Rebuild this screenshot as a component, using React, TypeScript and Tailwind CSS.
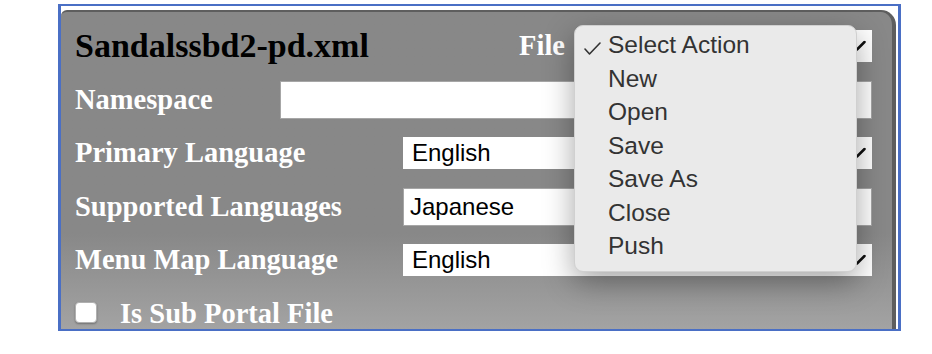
import React from "react";

const serif = "font-['Liberation_Serif',serif] font-bold text-white";
const sans = "font-['Liberation_Sans',Arial,sans-serif]";

function Chevron() {
  return (
    <svg
      className="absolute right-[6px] top-1/2 -translate-y-1/2"
      width="18"
      height="11"
      viewBox="0 0 18 11"
      fill="none"
    >
      <path d="M1.5 1.5 L9 9 L16.5 1.5" stroke="#111" strokeWidth="2.5" strokeLinecap="round" strokeLinejoin="round" />
    </svg>
  );
}

function SelectBox({ value, className }: { value?: string; className: string }) {
  return (
    <div className={`relative h-[32px] bg-white ${className}`}>
      {value && (
        <span className={`${sans} block pl-[9px] text-[24px] leading-[32px] text-black`}>{value}</span>
      )}
      <Chevron />
    </div>
  );
}

function TextBox({ value, className }: { value?: string; className: string }) {
  return (
    <div className={`h-[38px] bg-white border border-[#a6a6a6] ${className}`}>
      {value && (
        <span className={`${sans} block pl-[6px] text-[24px] leading-[36px] text-black`}>{value}</span>
      )}
    </div>
  );
}

const actions = ["Select Action", "New", "Open", "Save", "Save As", "Close", "Push"];

export default function App() {
  return (
    <div className="relative w-[932px] h-[354px] bg-white overflow-hidden pt-[4px] pl-[58px]">
      <div className="flex flex-col w-[843px] h-[327px] border-[#4a6fc5] border-t-2 border-b-2 border-l-[3px] border-r-[3px] overflow-hidden bg-white">
        <div className="flex-1 mt-[4px] mr-[2px] rounded-tl-[6px] rounded-tr-[15px] border-t-2 border-r-4 border-[#5e5e5e] bg-linear-to-b from-[#888888] from-70% to-[#a3a3a3] pt-[18px] pl-[14px] pr-[20px]">
          <div className="flex h-[32px] items-center">
            <span className="font-['Liberation_Serif',serif] font-bold text-[34px] leading-[32px] text-black">
              Sandalssbd2-pd.xml
            </span>
            <div className="flex-1" />
            <span className={`${serif} text-[28.5px] leading-[32px]`}>File</span>
            <SelectBox className="ml-[10px] w-[297px]" />
          </div>

          <div className="mt-[19px] flex h-[38px] items-center">
            <span className={`${serif} text-[28.5px] leading-[38px]`}>Namespace</span>
            <TextBox className="ml-auto w-[592px]" />
          </div>

          <div className="mt-[18px] flex h-[32px] items-center">
            <span className={`${serif} text-[28.5px] leading-[32px]`}>Primary Language</span>
            <SelectBox value="English" className="ml-auto w-[469px]" />
          </div>

          <div className="mt-[19px] flex h-[38px] items-center">
            <span className={`${serif} text-[28.5px] leading-[38px]`}>Supported Languages</span>
            <TextBox value="Japanese" className="ml-auto w-[469px]" />
          </div>

          <div className="mt-[18px] flex h-[32px] items-center">
            <span className={`${serif} text-[28.5px] leading-[32px]`}>Menu Map Language</span>
            <SelectBox value="English" className="ml-auto w-[469px]" />
          </div>

          <div className="mt-[24px] flex items-start">
            <div className="mt-[2px] h-[21px] w-[22px] rounded-[4px] border border-[#b0b0b0] bg-white shadow-[0_1px_2px_rgba(0,0,0,0.3)]" />
            <span className={`${serif} ml-[23px] text-[28.5px] leading-[28px]`}>Is Sub Portal File</span>
          </div>
        </div>
      </div>

      {/* open native dropdown of the File select */}
      <div className="absolute left-[574px] top-[25px] w-[283px] h-[247px] rounded-[9px] border border-[#d0d0d0] bg-[#eaeaea] pt-[2px] shadow-[0_10px_30px_rgba(0,0,0,0.35)]">
        {actions.map((a, i) => (
          <div key={a} className="relative h-[33.5px]">
            {i === 0 && (
              <svg className="absolute left-[9px] top-[14px]" width="17" height="13" viewBox="0 0 17 13" fill="none">
                <path d="M1 7 L5.5 12 L16 1" stroke="#333" strokeWidth="1.6" strokeLinecap="round" strokeLinejoin="round" />
              </svg>
            )}
            <span className={`${sans} block pl-[33px] text-[24.5px] leading-[33.5px] text-[#333333]`}>{a}</span>
          </div>
        ))}
      </div>
    </div>
  );
}
